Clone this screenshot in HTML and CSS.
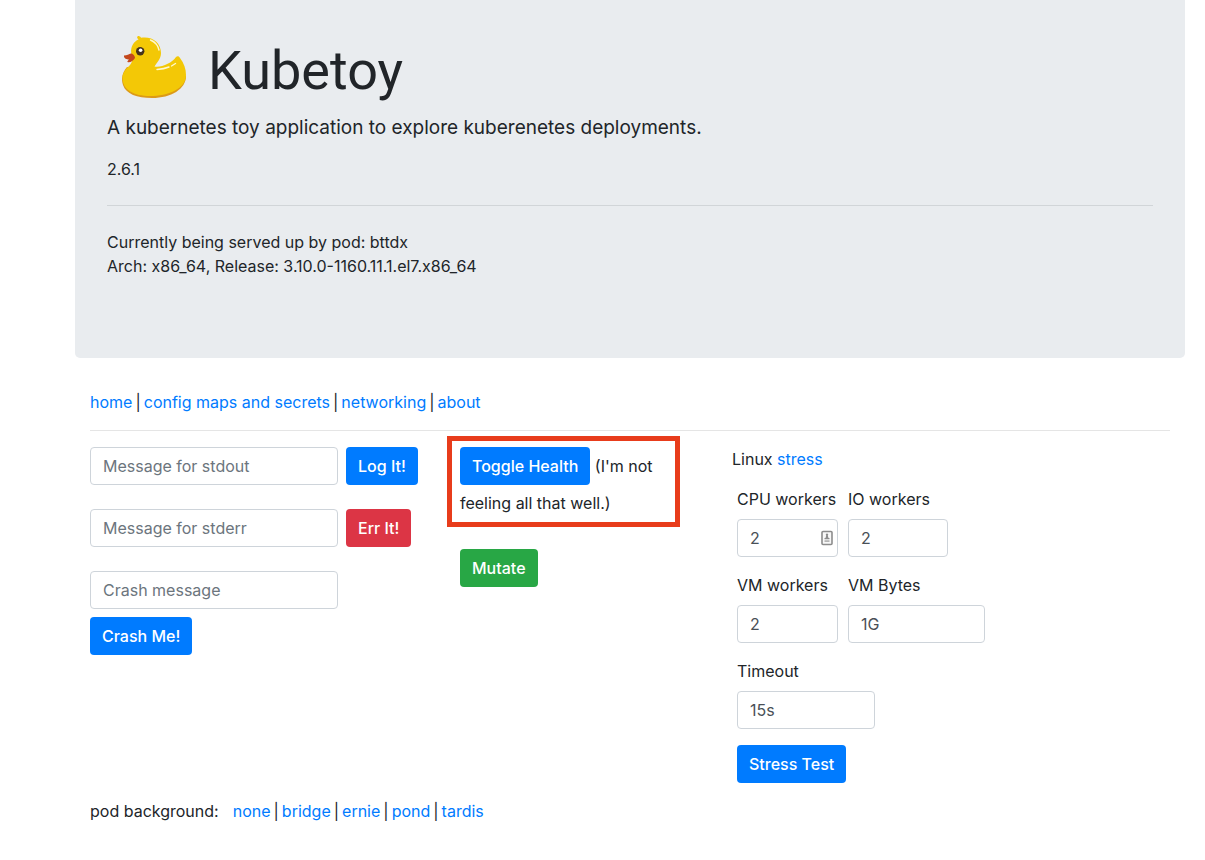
FILE: index.html
```
<!DOCTYPE html>
<html lang="en">
<head>
<meta charset="utf-8">
<meta name="viewport" content="width=device-width, initial-scale=1">
<title>Kubetoy</title>
<link rel="stylesheet" href="styles.css">
</head>
<body>
<div class="container">
  <header class="hero">
    <h1 class="brand">
      <svg class="duck" viewBox="0 0 90 85" aria-hidden="true">
        <path fill="#dc9a17" d="M17 42C12 48 11 54 13 60C16 69 27 73 42 73C61 73 76 64 76 51Z"/>
        <path fill="#f3c806" d="M27.500 11.500C28.500 10.500 30.500 11.500 31 12.800C42 11 51 17.500 51 28C51 34 46.500 38 44.500 41.500C51 43 62 38 66 32C67.500 30.500 69 31 70 33C74 38 76 44 76 50C76 64 58 71 40 71C24 71 12.500 65 12.500 53C12.500 47 17 43 20 40C23 37 22 33 21.200 28C20.500 21 24 16.500 28.500 14.500C27.500 13.500 26.500 12.500 27.500 11.500Z"/>
        <path fill="#c3471b" d="M14 30.500C17 30.500 19 29 21 28.500C23 28.500 25 31 25 33C23 36 20 38 17.500 37C17 36.500 18 35.500 19 34.500C17 34.500 13.500 33.500 14 30.500Z"/>
        <circle cx="30.200" cy="26.200" r="4.200" fill="#46341b"/>
        <circle cx="30.600" cy="25.200" r="1.800" fill="#fff"/>
        <path fill="none" stroke="#fff8d0" stroke-width="1.400" stroke-linecap="round" d="M40.500 15Q47.500 18 49 25M47 44.500Q54 44 59 42M61.500 41L65.500 38.500"/>
      </svg>
      Kubetoy
    </h1>
    <p class="lead">A kubernetes toy application to explore kuberenetes deployments.</p>
    <p class="version">2.6.1</p>
    <hr class="hero-rule">
    <p class="pod-info">Currently being served up by pod: bttdx<br>Arch: x86_64, Release: 3.10.0-1160.11.1.el7.x86_64</p>
  </header>

  <main class="content">
    <nav class="links menu"><a href="#home">home</a> <span>|</span> <a href="#config">config maps and secrets</a> <span>|</span> <a href="#networking">networking</a> <span>|</span> <a href="#about">about</a></nav>

    <div class="columns">
      <section class="messages">
        <form class="message-form">
          <input class="field" type="text" placeholder="Message for stdout" aria-label="Message for stdout">
          <button class="btn primary" type="button">Log It!</button>
        </form>
        <form class="message-form">
          <input class="field" type="text" placeholder="Message for stderr" aria-label="Message for stderr">
          <button class="btn danger" type="button">Err It!</button>
        </form>
        <form class="message-form">
          <input class="field" type="text" placeholder="Crash message" aria-label="Crash message">
          <button class="btn primary" type="button">Crash Me!</button>
        </form>
      </section>

      <section class="health">
        <div class="callout"><button class="btn primary" type="button">Toggle Health</button> (I'm not feeling all that well.)</div>
        <button class="btn success" type="button">Mutate</button>
      </section>

      <section class="stress">
        <p class="stress-title">Linux <a href="#stress">stress</a></p>
        <form class="stress-form">
          <div class="group">
            <label for="cpu">CPU workers</label>
            <div class="autofill">
              <input class="field" id="cpu" type="text" value="2">
              <svg class="autofill-icon" viewBox="0 0 12 16" aria-hidden="true">
                <rect x="1" y="1.500" width="10" height="13" rx="1" fill="#f8f8f8" stroke="#8c8c8c" stroke-width="1.600"/>
                <path fill="#8c8c8c" d="M6 3.500a1.200 1.200 0 0 1 .8 2.100L7.500 8h-3l.7-2.400A1.200 1.200 0 0 1 6 3.500ZM3.500 8h5v1.200h-5Z"/>
                <path fill="#b5b5b5" d="M3.500 10.200h5V12h-5Z"/>
              </svg>
            </div>
          </div>
          <div class="group"><label for="io">IO workers</label><input class="field short" id="io" type="text" value="2"></div>
          <div class="group"><label for="vm">VM workers</label><input class="field" id="vm" type="text" value="2"></div>
          <div class="group"><label for="bytes">VM Bytes</label><input class="field" id="bytes" type="text" value="1G"></div>
          <div class="group wide"><label for="timeout">Timeout</label><input class="field medium" id="timeout" type="text" value="15s"></div>
          <button class="btn primary" type="button">Stress Test</button>
        </form>
      </section>
    </div>

    <footer class="backgrounds"><span>pod background:</span><span class="links"><a href="#none">none</a> <span>|</span> <a href="#bridge">bridge</a> <span>|</span> <a href="#ernie">ernie</a> <span>|</span> <a href="#pond">pond</a> <span>|</span> <a href="#tardis">tardis</a></span></footer>
  </main>
</div>
</body>
</html>
```
FILE: styles.css
```
* {
  box-sizing: border-box;
}

body {
  margin: 0;
  background: #fff;
  color: #212529;
  font: 16px/24px Inter, "Liberation Sans", sans-serif;
}

p,
h1 {
  margin: 0;
}

a {
  color: #007bff;
  text-decoration: none;
}

.container {
  max-width: 1205px;
  padding: 0 20px 0 75px;
}

.hero {
  padding: 25px 32px 80px;
  border-radius: 0 0 5px 5px;
  background: #e9ecef;
}

.brand {
  display: flex;
  align-items: flex-start;
  gap: 8px;
  font: 400 54px/92px Roboto, "Liberation Sans", sans-serif;
}

.duck {
  width: 90px;
  height: 85px;
  margin-left: 3px;
}

.lead {
  margin-bottom: 18px;
  font-size: 19px;
  line-height: 22px;
}

.hero-rule {
  margin: 24px 0;
  border: 0;
  border-top: 1px solid #d1d5d8;
}

.content {
  padding: 32px 15px;
}

.links {
  display: flex;
  flex-wrap: wrap;
  gap: 3px;
}

.menu {
  padding-bottom: 16px;
  border-bottom: 1px solid #e5e5e5;
}

.columns {
  display: grid;
  grid-template-columns: 357px 285px 1fr;
}

.messages {
  display: flex;
  flex-direction: column;
  gap: 24px;
  padding-top: 16px;
}

.message-form {
  display: flex;
  flex-wrap: wrap;
  gap: 8px;
  padding-right: 20px;
}

.message-form .field {
  width: 248px;
}

.field {
  display: block;
  width: 100%;
  height: 38px;
  padding: 6px 12px;
  border: 1px solid #ced4da;
  border-radius: 4px;
  background: #fff;
  color: #495057;
  font: inherit;
}

.field::placeholder {
  color: #6c757d;
  opacity: 1;
}

.btn {
  height: 38px;
  padding: 0 12px;
  border: 0;
  border-radius: 4px;
  color: #fff;
  font: inherit;
  font-weight: 500;
}

.primary {
  background: #007bff;
}

.danger {
  background: #dc3545;
}

.success {
  background: #28a745;
}

.health {
  padding-top: 5px;
}

.callout {
  width: 233px;
  margin-bottom: 22px;
  padding: 6px 8px 0;
  border: 5px solid #e83c1b;
  line-height: 37px;
}

.health > .btn {
  margin-left: 13px;
}

.stress {
  padding-top: 16px;
}

.stress-title {
  margin-bottom: 16px;
}

.stress-form {
  display: grid;
  grid-template-columns: 101px 137px;
  gap: 16px 10px;
  justify-items: start;
  padding-left: 5px;
}

.group {
  display: flex;
  flex-direction: column;
  gap: 8px;
  width: 100%;
}

.wide {
  grid-column: 1 / -1;
}

.short {
  width: 100px;
}

.medium {
  width: 138px;
}

.stress-form > .btn {
  grid-column: 1 / -1;
}

.autofill {
  position: relative;
}

.autofill-icon {
  position: absolute;
  top: 11px;
  right: 5px;
  width: 12px;
  height: 16px;
}

.backgrounds {
  display: flex;
  gap: 14px;
  margin-top: 16px;
}
```
